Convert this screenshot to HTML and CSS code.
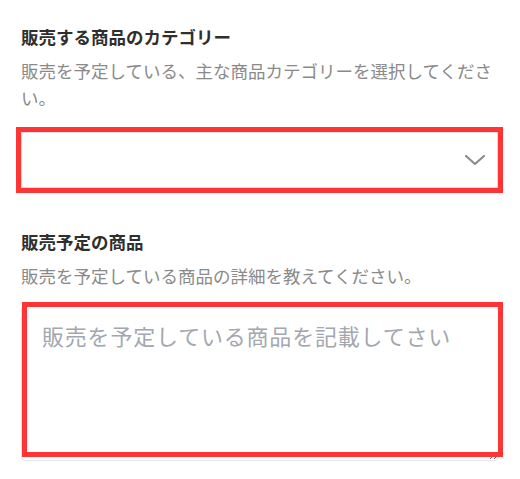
FILE: index.html
```html
<!DOCTYPE html>
<html lang="ja">
<head>
<meta charset="utf-8">
<link rel="stylesheet" href="styles.css">
</head>
<body>
<div class="form">
  <section class="field field-category">
    <h2 class="label">販売する商品のカテゴリー</h2>
    <p class="help help-category">販売を予定している、主な商品カテゴリーを選択してください。</p>
    <div class="select" role="combobox" aria-expanded="false">
      <svg class="chevron" width="20" height="10" viewBox="0 0 20 10" aria-hidden="true">
        <polyline points="1,1 10,9 19,1" fill="none" stroke="#8c8c8c" stroke-width="2.2" stroke-linecap="round" stroke-linejoin="round"/>
      </svg>
    </div>
  </section>
  <section class="field field-product">
    <h2 class="label">販売予定の商品</h2>
    <p class="help help-product">販売を予定している商品の詳細を教えてください。</p>
    <div class="textarea-wrap">
      <textarea class="textarea" placeholder="販売を予定している商品を記載してさい"></textarea>
      <div class="highlight"></div>
    </div>
  </section>
</div>
</body>
</html>
```

FILE: styles.css
```css
html, body {
  margin: 0;
  padding: 0;
  background: #ffffff;
}

body {
  font-family: "Noto Sans CJK JP", "Noto Sans", sans-serif;
}

.form {
  width: 478px;
  padding: 24px 0 0 21px;
}

.field-product {
  margin-top: 40.5px;
}

.label {
  margin: 0;
  font-size: 17.5px;
  line-height: 26px;
  font-weight: 700;
  color: #2f2f2f;
}

.help {
  margin: 6.5px 0 0;
  font-size: 17.5px;
  line-height: 27.5px;
  font-weight: 400;
  color: #8a8a8a;
}

.help-category {
  margin-bottom: 20.75px;
  width: 477px;
}

.help-product {
  margin-bottom: 16.25px;
  margin-top: 7.5px;
}

.select {
  box-sizing: border-box;
  width: 477px;
  height: 56px;
  border: 1px solid #dcdcdc;
  outline: 5px solid #ff3535;
  display: flex;
  align-items: center;
  justify-content: flex-end;
  padding-right: 12px;
}

.chevron {
  display: block;
}

.textarea-wrap {
  position: relative;
  width: 478px;
  height: 155px;
}

.textarea {
  box-sizing: border-box;
  display: block;
  width: 478px;
  height: 155px;
  margin: 0;
  padding: 13px 20px;
  border: 1px solid #e3e6ea;
  border-radius: 4px;
  font-family: "Noto Sans CJK JP", "Noto Sans", sans-serif;
  font-size: 22px;
  line-height: 30px;
  letter-spacing: 0.8px;
  color: #333;
  background: #fff;
  outline: none;
}

.textarea::placeholder {
  color: #a3a7b0;
}

.highlight {
  position: absolute;
  left: 1px;
  top: -4px;
  width: 481px;
  height: 155px;
  box-sizing: border-box;
  border: 5px solid #ff3535;
  pointer-events: none;
}
```
